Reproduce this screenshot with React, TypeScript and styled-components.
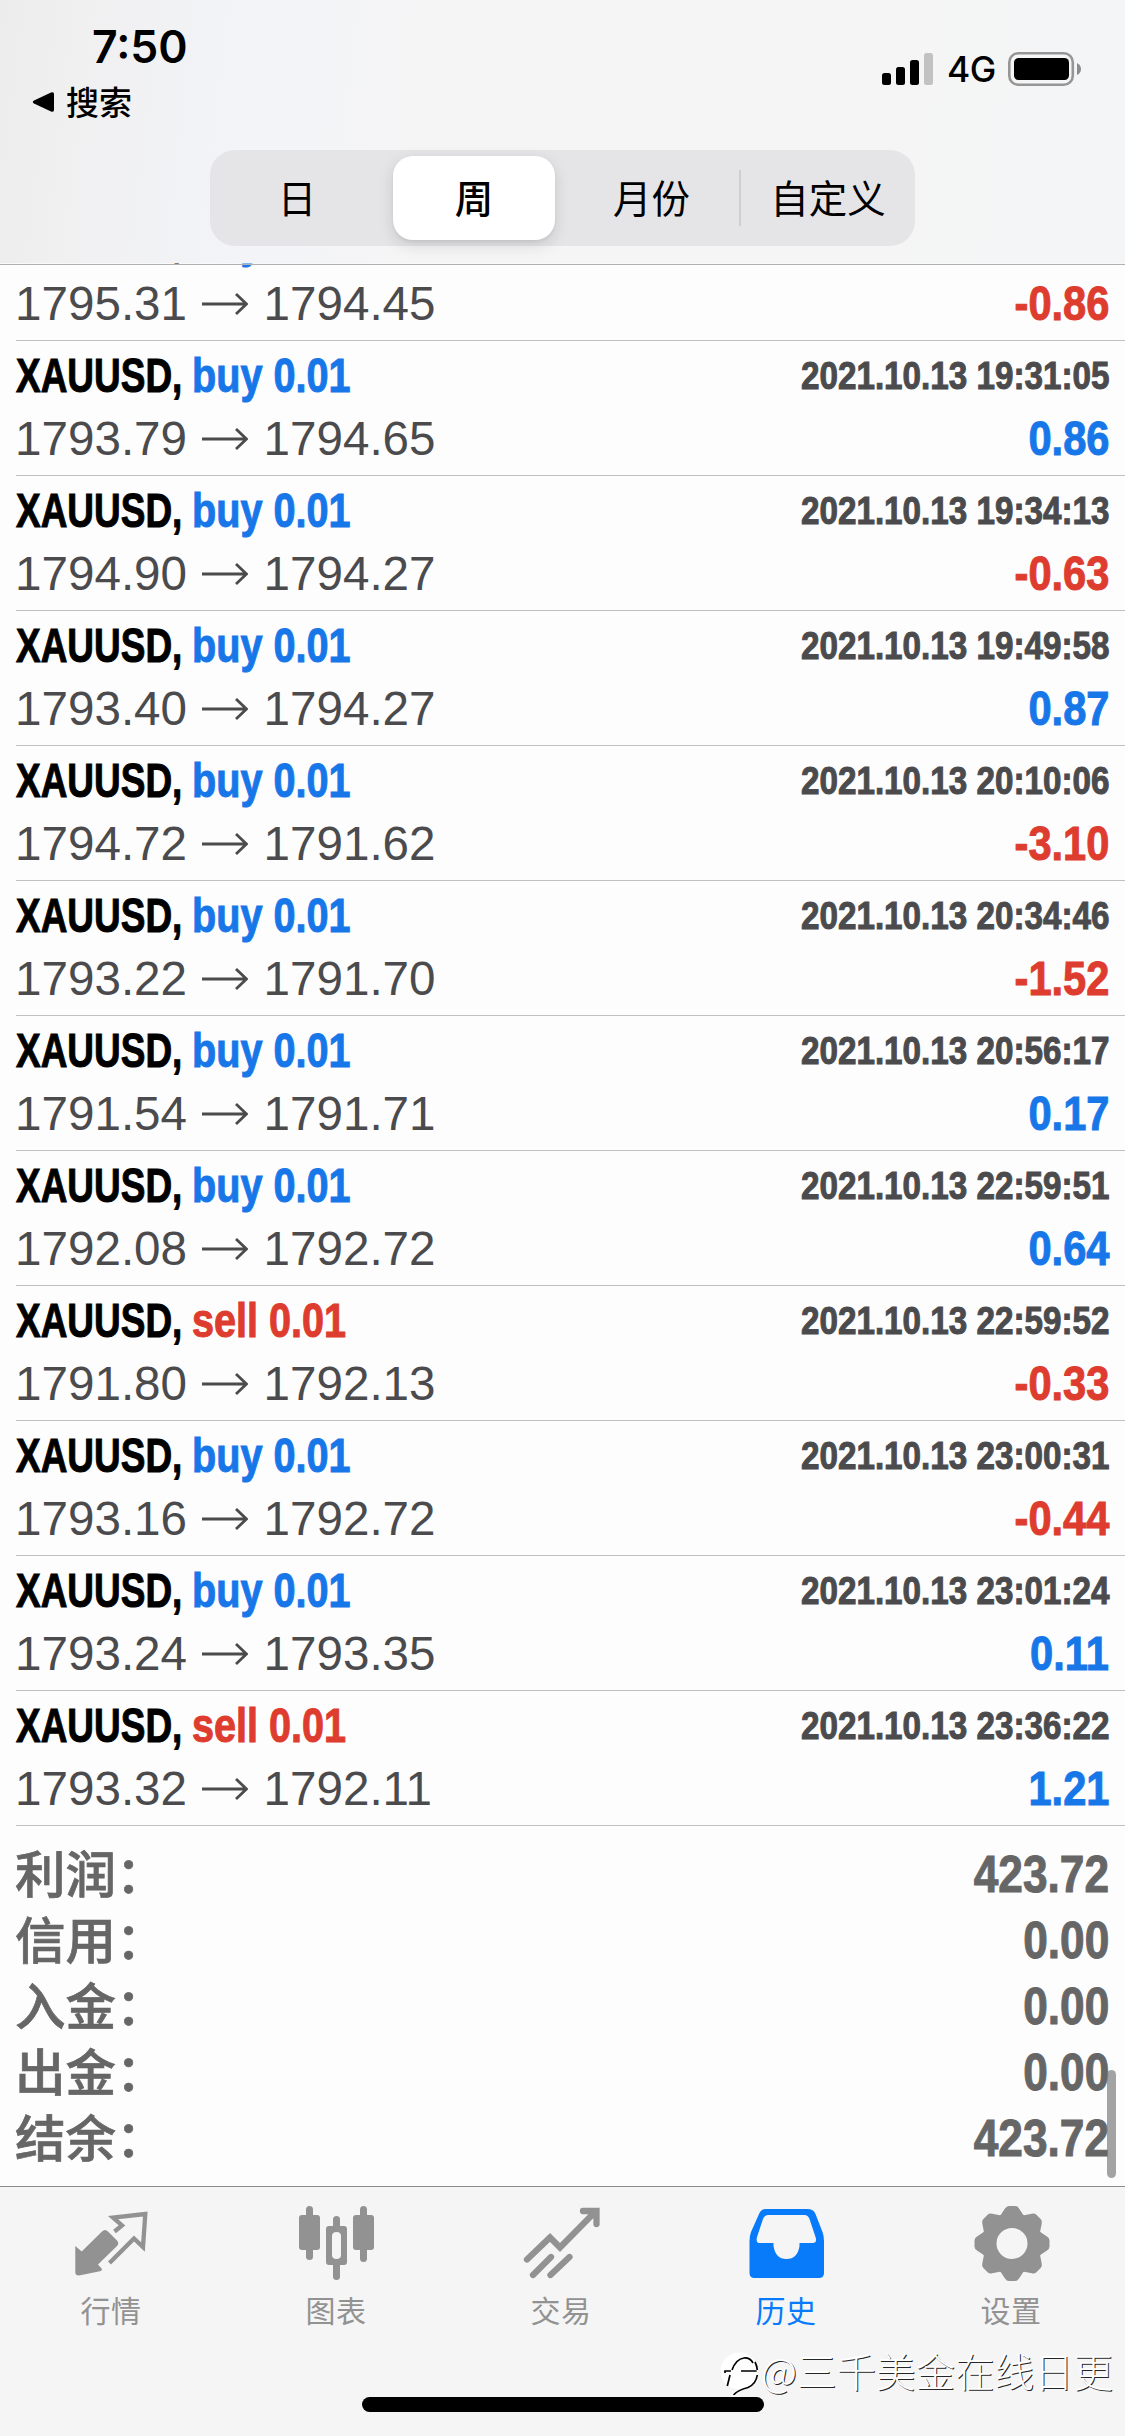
import React from "react";
import styled, { createGlobalStyle } from "styled-components";

const BLUE = "#1877e8";
const RED = "#dd3c2e";
const cjk = `"Noto Sans CJK SC", sans-serif`;
const latin = `"Liberation Sans", Arial, sans-serif`;

const Global = createGlobalStyle`
  * { box-sizing: border-box; }
  body { margin: 0; background: #fdfdfd; }
`;

const Screen = styled.div`
  position: relative;
  width: 1125px;
  height: 2436px;
  display: flex;
  flex-direction: column;
  overflow: hidden;
  background: #fdfdfd;
  font-family: ${latin};
`;

const Header = styled.header`
  height: 263px;
  flex: none;
  display: flex;
  flex-direction: column;
  background: linear-gradient(97deg, #ececed 0, #f0f0f1 90px, #f3f4f8 270px, #f5f5f6 420px, #f5f5f5 900px, #f4f5f7 1125px);
`;

const StatusBar = styled.div`
  height: 150px;
  display: flex;
  justify-content: space-between;
  padding: 19px 43px 0 32px;
`;

const Clock = styled.div`
  padding-left: 60px;
  height: 56px;
  font: 600 44.5px/56px Inter, sans-serif;
  color: #000;
`;

const Back = styled.div`
  display: flex;
  align-items: center;
  gap: 11px;
  height: 54px;
  font: 500 33px/54px ${cjk};
  color: #000;
`;

const BackLabel = styled.span`
  height: 57px;
`;

const Signals = styled.div`
  display: flex;
  align-items: flex-end;
  height: 67px;
`;

const Network = styled.span`
  width: 74px;
  flex: none;
  padding-left: 13px;
  font: 500 35.5px/35px Inter, sans-serif;
  letter-spacing: -0.5px;
  height: 34px;
`;

const Segments = styled.nav`
  width: 705px;
  height: 96px;
  margin-left: 210px;
  display: grid;
  grid-template-columns: 174px 178px 179px 174px;
  align-items: center;
  border-radius: 25px;
  background: #e5e5e8;
`;

const Segment = styled.div<{ $on?: boolean; $line?: boolean }>`
  height: ${(p) => (p.$on ? 84 : 56)}px;
  margin: 0 ${(p) => (p.$on ? "7px 0 9px" : 0)};
  padding-bottom: 4px;
  display: flex;
  align-items: center;
  justify-content: center;
  border-radius: ${(p) => (p.$on ? 20 : 0)}px;
  background: ${(p) => (p.$on ? "#fff" : "none")};
  box-shadow: ${(p) => (p.$on ? "0 5px 16px rgba(0,0,0,.13), 0 2px 3px rgba(0,0,0,.05)" : p.$line ? "-2px 0 0 #cfcfd1" : "none")};
  font: ${(p) => (p.$on ? 500 : 400)} 38.5px/52px ${cjk};
  color: #000;
`;

const History = styled.main`
  position: relative;
  flex: 1;
  min-height: 0;
  display: flex;
  flex-direction: column;
  justify-content: flex-end;
  overflow: hidden;
`;

const HeaderEdge = styled.div`
  position: absolute;
  inset: 0 0 auto 0;
  height: 2px;
  background: rgba(245, 245, 245, 0.5);
  border-bottom: 1px solid #b0b0b2;
`;

const Deal = styled.section`
  flex: none;
  height: 135px;
  margin-left: 16px;
  padding-right: 16px;
  border-bottom: 1px solid #c0c0c2;
`;

const Line = styled.div<{ $h: number }>`
  height: ${(p) => p.$h}px;
  display: flex;
  align-items: center;
  line-height: ${(p) => p.$h}px;
  white-space: nowrap;
`;

const TitleLine = styled(Line)`
  padding-top: 1px;
`;

const Narrow = styled.span<{ $scale: number; $size: number; $color: string; $w?: number; $end?: boolean }>`
  display: block;
  width: ${(p) => (p.$w ? p.$w + "px" : "auto")};
  margin-left: ${(p) => (p.$end ? "auto" : "0")};
  transform: scaleX(${(p) => p.$scale});
  transform-origin: ${(p) => (p.$end ? "right" : "left")} center;
  font-weight: 700;
  font-size: ${(p) => p.$size}px;
  color: ${(p) => p.$color};
  -webkit-text-stroke: 1px ${(p) => p.$color};
`;

const Price = styled.span`
  font-size: 47.6px;
  width: 186.5px;
  margin-left: -1px;
  color: #4b4b4d;
`;

const ArrowIcon = styled.svg`
  width: 46px;
  height: 24px;
  margin-right: 17px;
  flex: none;
`;

const Summary = styled.section`
  flex: none;
  height: 360px;
  padding: 14px 16px 16px;
`;

const Total = styled.div`
  height: 66px;
  display: flex;
  align-items: center;
`;

const TotalLabel = styled.span`
  margin: -4px 0 0 -1px;
  font: 500 50.5px/66px ${cjk};
  color: #666;
  -webkit-text-stroke: 0.7px #666;
`;

const TotalValue = styled(Narrow)`
  padding-top: 2px;
`;

const ScrollThumb = styled.div`
  position: absolute;
  right: 9px;
  bottom: 8px;
  width: 9px;
  height: 108px;
  border-radius: 5px;
  background: rgba(120, 120, 120, 0.68);
`;

const TabBar = styled.footer`
  flex: none;
  height: 250px;
  border-top: 1px solid #8c8c8c;
  background: #f5f5f5;
  display: flex;
  flex-direction: column;
  align-items: center;
`;

const Tabs = styled.div`
  width: 1125px;
  height: 210px;
  display: grid;
  grid-template-columns: repeat(5, 225px);
`;

const Tab = styled.div<{ $on?: boolean }>`
  display: flex;
  flex-direction: column;
  align-items: center;
  padding: 17px 3px 0 0;
  color: ${(p) => (p.$on ? "#087bfb" : "#929292")};
`;

const TabIcon = styled.svg`
  width: 80px;
  height: 80px;
`;

const TabLabel = styled.span`
  margin-top: 3px;
  font: 400 30px/44px ${cjk};
  letter-spacing: 0.5px;
`;

const HomeBar = styled.div`
  width: 402px;
  height: 15px;
  border-radius: 8px;
  background: #000;
`;

const Watermark = styled.div`
  position: absolute;
  left: 719px;
  top: 2340px;
  display: flex;
  align-items: center;
  font: 300 39.5px/60px ${cjk};
  color: #fff;
  text-shadow: 1px 1px 0.5px rgba(0, 0, 0, 0.85);
`;

const WatermarkLogo = styled.svg`
  width: 42px;
  height: 50px;
`;

const deals: [string, string, string, string, string][] = [
  ["buy", "1795.31", "1794.45", "2021.10.13 19:30:15", "-0.86"],
  ["buy", "1793.79", "1794.65", "2021.10.13 19:31:05", "0.86"],
  ["buy", "1794.90", "1794.27", "2021.10.13 19:34:13", "-0.63"],
  ["buy", "1793.40", "1794.27", "2021.10.13 19:49:58", "0.87"],
  ["buy", "1794.72", "1791.62", "2021.10.13 20:10:06", "-3.10"],
  ["buy", "1793.22", "1791.70", "2021.10.13 20:34:46", "-1.52"],
  ["buy", "1791.54", "1791.71", "2021.10.13 20:56:17", "0.17"],
  ["buy", "1792.08", "1792.72", "2021.10.13 22:59:51", "0.64"],
  ["sell", "1791.80", "1792.13", "2021.10.13 22:59:52", "-0.33"],
  ["buy", "1793.16", "1792.72", "2021.10.13 23:00:31", "-0.44"],
  ["buy", "1793.24", "1793.35", "2021.10.13 23:01:24", "0.11"],
  ["sell", "1793.32", "1792.11", "2021.10.13 23:36:22", "1.21"],
];

const totals: [string, string][] = [
  ["利润", "423.72"],
  ["信用", "0.00"],
  ["入金", "0.00"],
  ["出金", "0.00"],
  ["结余", "423.72"],
];

const gearTeeth = [0, 45, 90, 135, 180, 225, 270, 315];

const icons: Record<string, React.ReactNode> = {
  行情: (
    <g transform="translate(1 0)">
      <path d="M3.300 41.500 L9.700 47 L30 27 Q33 24 36 27 L45 36 Q47.500 39 45 41.500 L26 60 L30 64.500 Q30 66.500 28 66.800 L7 71 Q3.300 71 3.300 68 Z" fill="currentColor" transform="translate(0 .5)" />
      <path d="M42.500 27.500 L50 21.500 L41 13.500 L73.300 10 L71 43 L62 34.500 L37.500 59" fill="none" stroke="currentColor" strokeWidth="4.300" />
    </g>
  ),
  图表: (
    <g fill="currentColor">
      <rect x="3" y="11" width="21" height="35" rx="3" />
      <rect x="10" y="2" width="7" height="54" rx="3.500" />
      <rect x="57" y="11" width="21" height="35" rx="3" />
      <rect x="64" y="2" width="7" height="56" rx="3.500" />
      <rect x="37" y="12" width="7" height="14" rx="3.500" />
      <rect x="37" y="55" width="7" height="21" rx="3.500" />
      <path fillRule="evenodd" d="M33 22h15q3 0 3 3v33q0 3-3 3H33q-3 0-3-3V25q0-3 3-3zM40.500 28q-4.500 0-4.500 4v19q0 4 4.500 4t4.500-4V32q0-4-4.500-4z" />
    </g>
  ),
  交易: (
    <path d="M6 55.500 L29 33.500 L39 43.500 L73 9 M62 7 H75.500 V20 M12 71 L30 53 M29.500 71 L48.500 53" fill="none" stroke="currentColor" strokeWidth="6.300" strokeLinecap="round" />
  ),
  历史: (
    <path fillRule="evenodd" fill="currentColor" transform="translate(-.5 0)" d="M20 5h42q6 0 8 5l7 18q1.500 4 1.500 9v32q0 5-5 5H9q-5 0-5-5V37q0-5 1.500-9l8-18q2-5 6.500-5zM23 11q-4 0-5.500 4l-6 18q-1.500 6 3 6H28v3q2 13 13 13t13-13v-3h13q5 0 3-6l-6-18q-1.500-4-5-4z" />
  ),
  设置: (
    <>
      <circle cx="41" cy="39.500" r="23" fill="none" stroke="currentColor" strokeWidth="15" />
      {gearTeeth.map((a) => (
        <path key={a} d="M29 12 L34 4.500 Q35.500 2 38 2 H44 Q46.500 2 48 4.500 L53 12 Z" fill="currentColor" transform={`rotate(${a} 41 39.500)`} />
      ))}
    </>
  ),
};

function DealRow({ deal }: { deal: [string, string, string, string, string] }) {
  const [side, open, close, time, profit] = deal;
  return (
    <Deal>
      <TitleLine $h={68}>
        <Narrow $scale={0.77} $size={48} $color="#000" $w={176}>XAUUSD,</Narrow>
        <Narrow $scale={0.825} $size={48} $color={side === "buy" ? BLUE : RED}>{side} 0.01</Narrow>
        <Narrow $end $scale={0.863} $size={38.5} $color="#4b4b4d">{time}</Narrow>
      </TitleLine>
      <Line $h={60}>
        <Price>{open}</Price>
        <ArrowIcon viewBox="0 0 46 24">
          <path d="M0 12H44M34 2L44.500 12L34 22" fill="none" stroke="#4b4b4d" strokeWidth="2.800" />
        </ArrowIcon>
        <Price>{close}</Price>
        <Narrow $end $scale={0.867} $size={48} $color={profit.startsWith("-") ? RED : BLUE}>{profit}</Narrow>
      </Line>
    </Deal>
  );
}

export default function App() {
  return (
    <Screen>
      <Global />
      <Header>
        <StatusBar>
          <div>
            <Clock>7:50</Clock>
            <Back>
              <svg width="23" height="22" viewBox="0 0 23 22">
                <path d="M2 9.500L19 1.500Q22 .5 22 3V19Q22 21.500 19 20.500L2 12.500Q-.5 11 2 9.500z" />
              </svg>
              <BackLabel>搜索</BackLabel>
            </Back>
          </div>
          <Signals>
            <svg width="52" height="34" viewBox="0 0 52 34">
              <rect x="0" y="21" width="9" height="12" rx="2.500" />
              <rect x="14" y="15" width="9" height="18" rx="2.500" />
              <rect x="28" y="8" width="9" height="25" rx="2.500" />
              <rect x="42" y="1" width="9" height="32" rx="2.500" fill="#c2c2c2" />
            </svg>
            <Network>4G</Network>
            <svg width="74" height="34" viewBox="0 0 74 34">
              <rect x="1.300" y="1.300" width="63.500" height="31.400" rx="9" fill="none" stroke="#969696" strokeWidth="2.600" />
              <rect x="6" y="6" width="55" height="22" rx="4.500" />
              <path d="M69 11Q73 13 73 17T69 23z" fill="#8c8c8c" />
            </svg>
          </Signals>
        </StatusBar>
        <Segments>
          <Segment>日</Segment>
          <Segment $on>周</Segment>
          <Segment>月份</Segment>
          <Segment $line>自定义</Segment>
        </Segments>
      </Header>
      <History>
        {deals.map((d) => (
          <DealRow key={d[3]} deal={d} />
        ))}
        <Summary>
          {totals.map(([label, value]) => (
            <Total key={label}>
              <TotalLabel>{label}：</TotalLabel>
              <TotalValue $end $scale={0.867} $size={51} $color="#666">{value}</TotalValue>
            </Total>
          ))}
        </Summary>
        <HeaderEdge />
        <ScrollThumb />
      </History>
      <TabBar>
        <Tabs>
          {Object.keys(icons).map((name) => (
            <Tab key={name} $on={name === "历史"}>
              <TabIcon viewBox="0 0 80 80" overflow="visible">{icons[name]}</TabIcon>
              <TabLabel>{name}</TabLabel>
            </Tab>
          ))}
        </Tabs>
        <HomeBar />
      </TabBar>
      <Watermark>
        <WatermarkLogo viewBox="0 0 42 50">
          <circle cx="20" cy="26" r="18.500" fill="#fff" />
          <path d="M6 28V26H12M13 25Q17 14 25 13Q31 12.500 34 18M22 26H37.700M36 17Q38 21 38.300 25M38.300 30Q37 39 29 42.500Q19 45 14.500 50M11 30L8.300 41" fill="none" stroke="#000" strokeWidth="1.700" />
        </WatermarkLogo>
        @三千美金在线日更
      </Watermark>
    </Screen>
  );
}
